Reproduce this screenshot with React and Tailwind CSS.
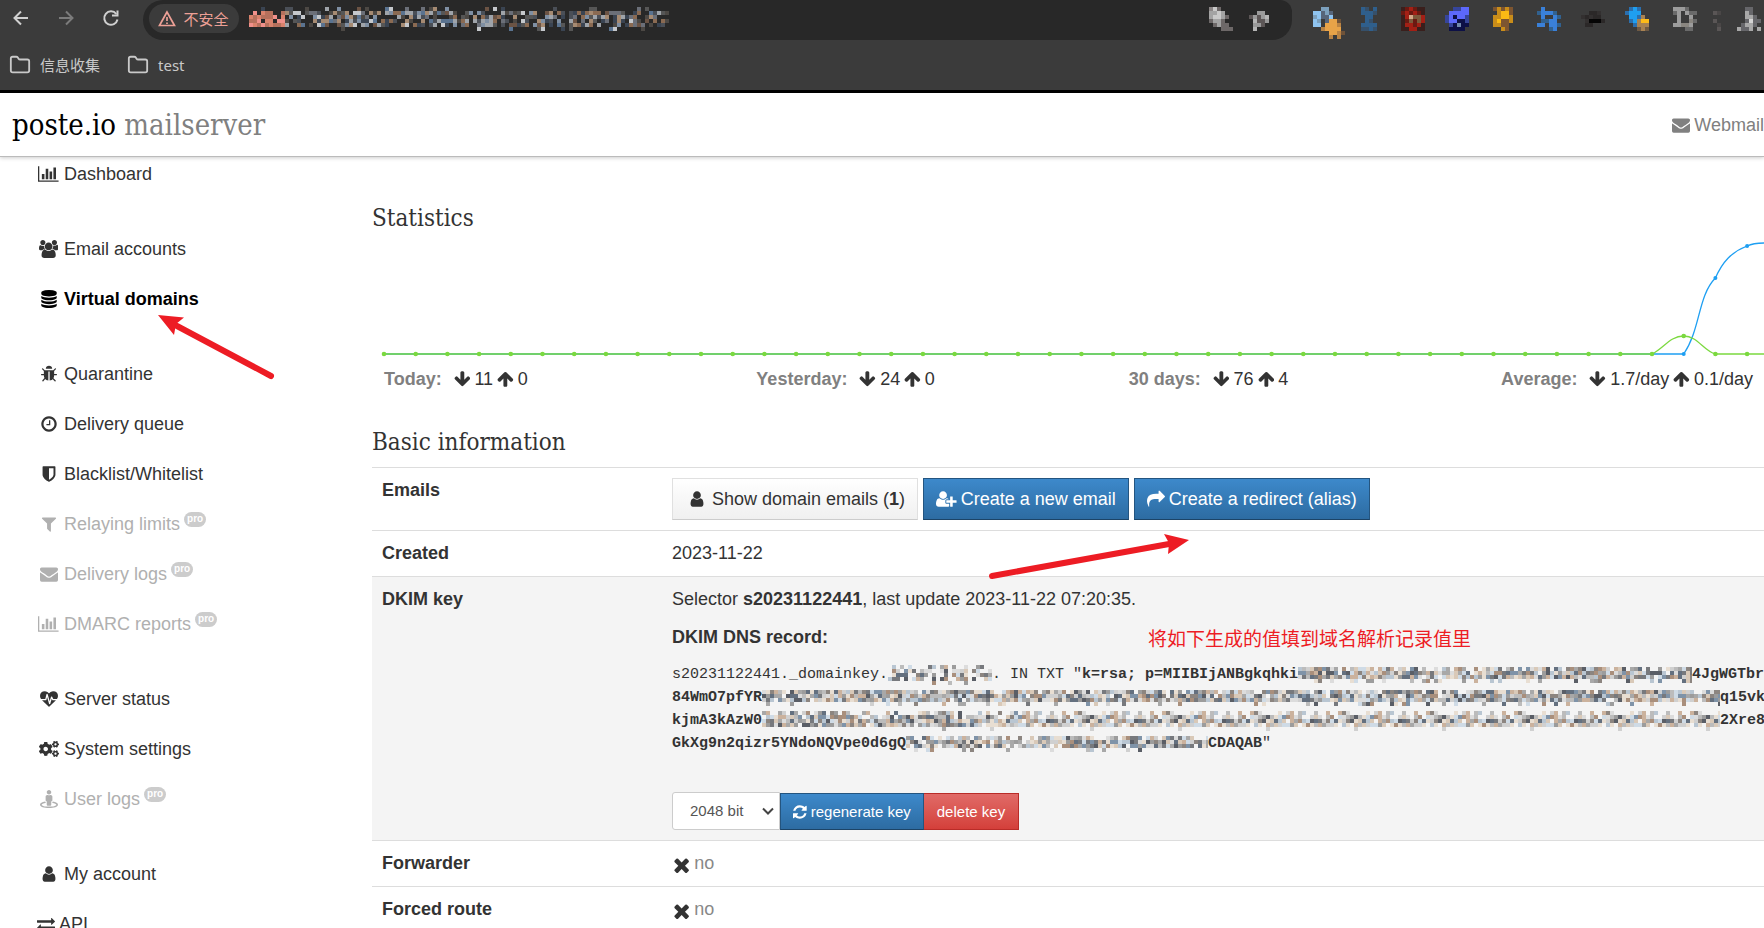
import React from "react";
import { FaCogs, FaStreetView } from "react-icons/fa";
import { LuFolder } from "react-icons/lu";

const ICONS = {
  chart: { box: "0 0 2048 1792", d: "M640 896v512h-256v-512h256zm384-512v1024h-256v-1024h256zm1024 1152v128h-2048v-1536h128v1408h1920zm-640-896v768h-256v-768h256zm384-384v1152h-256v-1152h256z" },
  users: { box: "64 0 1920 1792", d: "M657 896q-162 5-265 128h-134q-82 0-138-40.5t-56-118.5q0-353 124-353 6 0 43.5 21t97.5 42.5 119 21.5q67 0 133-23-5 37-5 66 0 159 93 293zm1071 637q0 120-73 189.5t-194 69.5h-874q-121 0-194-69.5t-73-189.5q0-53 3.5-103.5t14-109 26.5-108.5 43-97.5 62-81 85.5-53.5 111.5-20q10 0 43 21.5t73 48 107 48 135 21.5 135-21.5 107-48 73-48 43-21.5q61 0 111.5 20t85.5 53.5 62 81 43 97.5 26.5 108.5 14 109 3.5 103.5zm-1024-1277q0 106-75 181t-181 75-181-75-75-181 75-181 181-75 181 75 75 181zm704 384q0 159-112.5 271.5t-271.5 112.5-271.5-112.5-112.5-271.5 112.5-271.5 271.5-112.5 271.5 112.5 112.5 271.5zm576 225q0 78-56 118.5t-138 40.5h-134q-103-123-265-128 93-134 93-293 0-29-5-66 66 23 133 23 59 0 119-21.5t97.5-42.5 43.5-21q124 0 124 353zm-128-609q0 106-75 181t-181 75-181-75-75-181 75-181 181-75 181 75 75 181z" },
  database: { box: "0 0 1792 1792", d: "M896 768q237 0 443-43t325-127v170q0 69-103 128t-280 93.5-385 34.5-385-34.5-280-93.5-103-128v-170q119 84 325 127t443 43zm0 768q237 0 443-43t325-127v170q0 69-103 128t-280 93.5-385 34.5-385-34.5-280-93.5-103-128v-170q119 84 325 127t443 43zm0-384q237 0 443-43t325-127v170q0 69-103 128t-280 93.5-385 34.5-385-34.5-280-93.5-103-128v-170q119 84 325 127t443 43zm0-1152q208 0 385 34.5t280 93.5 103 128v128q0 69-103 128t-280 93.5-385 34.5-385-34.5-280-93.5-103-128v-128q0-69 103-128t280-93.5 385-34.5z" },
  bug: { box: "0 0 1792 1792", d: "M1696 960q0 26-19 45t-45 19h-224q0 171-67 290l208 209q19 19 19 45t-19 45q-18 19-45 19t-45-19l-198-197q-5 5-15 13t-42 28.5-65 36.5-82 29-97 13v-896h-128v896q-51 0-101.5-13.5t-87-33-66-39-43.5-32.5l-15-14-183 207q-20 21-48 21-24 0-43-16-19-18-20.5-44.5t15.5-46.5l202-227q-58-114-58-274h-224q-26 0-45-19t-19-45 19-45 45-19h224v-294l-173-173q-19-19-19-45t19-45 45-19 45 19l173 173h844l173-173q19-19 45-19t45 19 19 45-19 45l-173 173v294h224q26 0 45 19t19 45zm-480-576h-640q0-133 93.5-226.5t226.5-93.5 226.5 93.5 93.5 226.5z" },
  clock: { box: "0 0 1792 1792", d: "M1024 544v448q0 14-9 23t-23 9h-320q-14 0-23-9t-9-23v-64q0-14 9-23t23-9h224v-352q0-14 9-23t23-9h64q14 0 23 9t9 23zm416 352q0-148-73-273t-198-198-273-73-273 73-198 198-73 273 73 273 198 198 273 73 273-73 198-198 73-273zm224 0q0 209-103 385.5t-279.5 279.5-385.5 103-385.5-103-279.5-279.5-103-385.5 103-385.5 279.5-279.5 385.5-103 385.5 103 279.5 279.5 103 385.5z" },
  shield: { box: "0 0 1792 1792", d: "M1344 960v-640h-448v1137q119-63 213-137 235-184 235-360zm192-768v768q0 86-33.5 170.5t-83 150-118 127.5-126.5 103-121 77.5-89.5 49.5-42.5 20q-12 6-26 6t-26-6q-16-7-42.5-20t-89.5-49.5-121-77.5-126.5-103-118-127.5-83-150-33.5-170.5v-768q0-26 19-45t45-19h1152q26 0 45 19t19 45z" },
  filter: { box: "0 0 1792 1792", d: "M1595 295q17 41-14 70l-493 493v742q0 42-39 59-13 5-25 5-27 0-45-19l-256-256q-19-19-19-45v-486l-493-493q-31-29-14-70 17-39 59-39h1280q42 0 59 39z" },
  envelope: { box: "0 0 1792 1792", d: "M1792 710v794q0 66-47 113t-113 47h-1472q-66 0-113-47t-47-113v-794q44 49 101 87 362 246 497 345 57 42 92.5 65.5t94.5 48 110 24.5h2q51 0 110-24.5t94.5-48 92.5-65.5q170-123 498-345 57-39 100-87zm0-294q0 79-49 151t-122 123q-376 261-468 325-10 7-42.5 31t-54 38.5-52 32.5-57.5 27-50 9h-2q-23 0-50-9t-57.5-27-52-32.5-54-38.5-42.5-31q-91-64-262-182.5t-205-142.5q-62-42-117-115.5t-55-136.5q0-78 41.5-130t118.5-52h1472q65 0 112.5 47t47.5 113z" },
  heartbeat: { box: "0 0 1792 1792", d: "M1280 1024h305q-5 6-10 10.5t-9 7.5l-3 4-623 600q-18 18-44 18t-44-18l-624-602q-5-2-21-20h369q22 0 39.5-13.5t22.5-34.5l70-281 190 667q6 20 23 33t39 13q21 0 38-13t23-33l146-485 56 112q18 35 57 35zm512-428q0 145-103 300h-369l-111-221q-8-17-25.5-27t-36.5-8q-45 5-56 46l-129 430-196-686q-6-20-23.5-33t-39.5-13-39 13.5-22 34.5l-116 464h-423q-103-155-103-300 0-220 127-344t351-124q62 0 126.5 21.5t120 58 95.5 68.5 76 68q36-36 76-68t95.5-68.5 120-58 126.5-21.5q224 0 351 124t127 344z" },
  user: { box: "0 0 1792 1792", d: "M1536 1399q0 109-62.5 187t-150.5 78h-854q-88 0-150.5-78t-62.5-187q0-85 8.5-160.5t31.5-152 58.5-131 94-89 134.5-34.5q131 128 313 128t313-128q76 0 134.5 34.5t94 89 58.5 131 31.5 152 8.5 160.5zm-256-887q0 159-112.5 271.5t-271.5 112.5-271.5-112.5-112.5-271.5 112.5-271.5 271.5-112.5 271.5 112.5 112.5 271.5z" },
  userPlus: { box: "0 0 2048 1792", d: "M704 896q-159 0-271.5-112.5t-112.5-271.5 112.5-271.5 271.5-112.5 271.5 112.5 112.5 271.5-112.5 271.5-271.5 112.5zm960 128h352q13 0 22.5 9.5t9.5 22.5v192q0 13-9.5 22.5t-22.5 9.5h-352v352q0 13-9.5 22.5t-22.5 9.5h-192q-13 0-22.5-9.5t-9.5-22.5v-352h-352q-13 0-22.5-9.5t-9.5-22.5v-192q0-13 9.5-22.5t22.5-9.5h352v-352q0-13 9.5-22.5t22.5-9.5h192q13 0 22.5 9.5t9.5 22.5v352zm-736 224q0 52 38 90t90 38h256v238q-68 50-171 50h-874q-121 0-194-69t-73-190q0-53 3.5-103.5t14-109 26.5-108.5 43-97.5 62-81 85.5-53.5 111.5-20q19 0 39 17 79 61 154.5 91.5t164.5 30.5 164.5-30.5 154.5-91.5q20-17 39-17 132 0 217 96h-223q-52 0-90 38t-38 90v192z" },
  share: { box: "0 0 1792 1792", d: "M1792 640q0 26-19 45l-512 512q-19 19-45 19t-45-19-19-45v-256h-224q-98 0-175.5 6t-154 21.5-133 42.5-105.5 69.5-80 101-48.5 138.5-17.5 181q0 55 5 123 0 6 2.5 23.5t2.5 26.5q0 15-8.5 25t-23.5 10q-16 0-28-17-7-9-13-22t-13.5-30-10.5-24q-127-285-127-451 0-199 53-333 162-403 875-403h224v-256q0-26 19-45t45-19 45 19l512 512q19 19 19 45z" },
  refresh: { box: "128 0 1536 1792", d: "M1639 1056q0 5-1 7-64 268-268 434.5t-478 166.5q-146 0-282.5-55t-243.5-157l-129 129q-19 19-45 19t-45-19-19-45v-448q0-26 19-45t45-19h448q26 0 45 19t19 45-19 45l-137 137q71 66 161 102t187 36q134 0 250-65t186-179q11-17 53-117 8-23 30-23h192q13 0 22.5 9.5t9.5 22.5zm25-800v448q0 26-19 45t-45 19h-448q-26 0-45-19t-19-45 19-45l138-138q-148-137-349-137-134 0-250 65t-186 179q-11 17-53 117-8 23-30 23h-199q-13 0-22.5-9.5t-9.5-22.5v-7q65-268 270-434.5t480-166.5q146 0 284 55.5t245 156.5l130-129q19-19 45-19t45 19 19 45z" },
  times: { box: "192 0 1408 1792", d: "M1490 1322q0 40-28 68l-136 136q-28 28-68 28t-68-28l-294-294-294 294q-28 28-68 28t-68-28l-136-136q-28-28-28-68t28-68l294-294-294-294q-28-28-28-68t28-68l136-136q28-28 68-28t68 28l294 294 294-294q28-28 68-28t68 28l136 136q28 28 28 68t-28 68l-294 294 294 294q28 28 28 68z" },
  down: { box: "64 0 1664 1792", d: "M1675 832q0 53-37 90l-651 652q-39 37-91 37-53 0-90-37l-651-652q-38-36-38-90 0-53 38-91l74-75q39-37 91-37 53 0 90 37l294 294v-704q0-52 38-90t90-38h128q52 0 90 38t38 90v704l294-294q37-37 90-37 52 0 91 37l75 75q37 39 37 91z" },
  up: { box: "64 0 1664 1792", d: "M1675 971q0 51-37 90l-75 75q-38 38-91 38-54 0-90-38l-294-293v704q0 52-37.5 84.5t-90.5 32.5h-128q-53 0-90.5-32.5t-37.5-84.5v-704l-294 293q-36 38-90 38t-90-38l-75-75q-38-38-38-90 0-53 38-91l651-651q35-37 90-37 54 0 91 37l651 651q37 39 37 91z" },
  exchange: { box: "0 0 1792 1792", d: "M1792 1184v192q0 13-9.5 22.5t-22.5 9.5h-1376v192q0 13-9.5 22.5t-22.5 9.5q-12 0-24-10l-319-320q-9-9-9-22 0-14 9-23l320-320q9-9 23-9 13 0 22.5 9.5t9.5 22.5v192h1376q13 0 22.5 9.5t9.5 22.5zm0-544q0 14-9 23l-320 320q-9 9-23 9-13 0-22.5-9.5t-9.5-22.5v-192h-1376q-13 0-22.5-9.5t-9.5-22.5v-192q0-13 9.5-22.5t22.5-9.5h1376v-192q0-14 9-23t23-9q12 0 24 10l319 319q9 9 9 23z" },
};

function Icon({ name, className = "h-[18px]" }) {
  if (name === "cogs") return <FaCogs className="size-5 shrink-0" aria-hidden="true" />;
  if (name === "street") return <FaStreetView className="size-[18px] shrink-0" aria-hidden="true" />;
  const { box, d } = ICONS[name];
  return (
    <svg viewBox={box} className={`${className} w-auto shrink-0`} fill="currentColor" aria-hidden="true">
      <path d={d} />
    </svg>
  );
}

/* Pixelated blocks that hide private text. */
const LIGHT = ["#5a5e66", "#77797d", "#8c8580", "#9c9c9c", "#a98f7c", "#7f93a8", "#b9c6d2", "#cfdbe6", "#d9c9b8", "#bcbcbc", "#dcdcdc", "#e8ded2", "#64707f", "#cbb29d", "#a8a8a8", "#d0d0d0"];
const DARK = ["#4a4f57", "#6b6f78", "#8a6a52", "#5a7390", "#9fa4aa", "#c5c8cc", "#3a4452", "#6b5344", "#a58a72", "#4c4844", "#7f8fa3", "#565656"];

function Mosaic({ width, rows, seed, dark = false }) {
  let s = seed;
  const rand = () => {
    s = (s * 1103515245 + 12345) % 2147483648;
    return s / 2147483648;
  };
  const palette = dark ? DARK : LIGHT;
  const cells = [];
  const cols = Math.ceil(width / 4);
  for (let c = 0; c < cols; c++) {
    rows.forEach((p, r) => {
      const hit = rand() < p;
      let color = palette[Math.floor(rand() * palette.length)];
      if (dark && c < 9 && r > 0 && r < 5) color = ["#d9826c", "#f0908a", "#b5705c"][Math.floor(rand() * 3)];
      if (hit) cells.push(<rect key={`${c}-${r}`} x={c * 4} y={r * 4} width="4" height="4" fill={color} />);
    });
  }
  return (
    <svg width={width} height={rows.length * 4} className="shrink-0" shapeRendering="crispEdges" aria-hidden="true">
      {cells}
    </svg>
  );
}

/* Small 4px-cell pictures for the toolbar's extension buttons; w is the slot each one takes. */
const SPRITES = [
  { w: 28, colors: { a: "#8fc4f0", b: "#7ca0bd", c: "#56657a", o: "#e8a348", p: "#b98344", q: "#6f5238" },
    rows: ["..bb....", "aacbc...", "bacca...", "ab.cooq.", "aa.ooop.", "..poooo.", "....oopq", "....p.p."] },
  { w: 20, colors: { a: "#2f5f8c", b: "#36506a" }, rows: ["ab.a", "aaab", ".aa.", ".ab.", "aaaa", "bbab"] },
  { w: 24, colors: { r: "#a32015", d: "#3a1f1c", m: "#6b1a12", t: "#d4a888", b: "#7c5a3c" }, rows: ["dmrmdd", "mrmrmd", "drtbbr", "dmbmbr", "drrmrd", "ddrrdd"] },
  { w: 28, colors: { v: "#5c68fb", d: "#36459a", n: "#0d1046", g: "#7289ac" }, rows: ["..ddvv", ".vvvvv", "dvnvvd", "dvvnnd", ".dngnn", ".nnnn."] },
  { w: 24, colors: { y: "#fbb914", o: "#c98d1a", b: "#7d5530" }, rows: ["bobob", ".oyyb", "ooyyo", "oybbo", "oobb.", "..ob."] },
  { w: 24, colors: { b: "#3a80d8", d: "#31618f" }, rows: [".b....", "dbbbd.", ".b..bd", ".ddbb.", "bb.bbd", "...db."] },
  { w: 24, colors: { k: "#050505", d: "#2b2828", m: "#333030" }, rows: ["......", "..ddm.", "mdmdd.", ".mkkkd", ".dd...", "......"] },
  { w: 28, colors: { b: "#1f9ff0", d: "#2b6fae", y: "#fdbb19", o: "#a88252", p: "#6f5a44" }, rows: [".dbd..", "dbbb..", ".bbdo.", ".dboyy", "..dooo", "...pop"] },
  { w: 20, colors: { g: "#9c9c9c", d: "#6a6a6a", e: "#8a8680" }, rows: ["gggd..", "dg.gdd", ".g..g.", ".g..ed", "ggeeg.", "...dd."] },
  { w: 4, colors: { g: "#5a5656", d: "#4a4747" }, rows: ["..", "gd", "..", "g.", ".d", ".g"] },
  { w: 24, colors: { g: "#a8a8a8", d: "#66666a", e: "#d4d4d4" }, rows: ["..dd..", "..gd..", "..ggd.", "..dedd", ".dggd.", "gddg.g"] },
];
const BAR_SPRITES = [
  { w: 20, colors: { g: "#a3a3a3", l: "#c9c9c9", d: "#6d6868", m: "#8a8585" }, rows: ["mld...", "gglg..", "gllgd.", "dggd..", ".dgdd.", "...ddd"] },
  { w: 20, colors: { g: "#9a9a9a", d: "#5c5656", l: "#b5b5b5" }, rows: [".....", "..gg.", "dgdgl", ".lddg", ".ggd.", ".l..."] },
];

function Sprite({ sprite }) {
  return (
    <svg width={sprite.w} height="32" className="shrink-0 overflow-visible" shapeRendering="crispEdges" aria-hidden="true">
      {sprite.rows.flatMap((row, y) =>
        [...row].map((ch, x) =>
          ch === "." ? null : <rect key={`${x}-${y}`} x={x * 4} y={y * 4} width="4" height="4" fill={sprite.colors[ch]} />
        )
      )}
    </svg>
  );
}

function BrowserBar() {
  return (
    <div className="h-[93px] shrink-0 overflow-hidden border-b-3 border-black bg-[#3b3b3b] font-['Noto_Sans','Noto_Sans_CJK_SC',sans-serif] text-[15px] text-[#c9c9c9]">
      <div className="flex h-10 items-start">
        <div className="flex h-9 w-[143px] shrink-0 items-center gap-[25px] pl-[11px]">
          <button aria-label="Back" className="text-[#d0d0d0]">
            <svg width="20" height="20" viewBox="0 0 20 20" fill="none" stroke="currentColor" strokeWidth="2"><path d="M17 10H4M10 3.5L3.500 10l6.500 6.500" /></svg>
          </button>
          <button aria-label="Forward" className="text-[#7b7b7b]">
            <svg width="20" height="20" viewBox="0 0 20 20" fill="none" stroke="currentColor" strokeWidth="2"><path d="M3 10h13M10 3.500L16.500 10 10 16.500" /></svg>
          </button>
          <button aria-label="Reload" className="text-[#d0d0d0]">
            <svg width="20" height="20" viewBox="0 0 20 20" fill="none" stroke="currentColor" strokeWidth="2"><path d="M16.500 11.500A6.700 6.700 0 1 1 15.300 6" /><path d="M16.500 2.500v5h-5.500" /></svg>
          </button>
        </div>
        <div className="flex h-10 min-w-0 grow items-start rounded-l-[20px] rounded-tr-[12px] rounded-br-[20px] bg-[#282828] pl-1.5">
          <button className="mt-1 flex h-[29px] shrink-0 items-center gap-1.5 rounded-full bg-[#3b3b3b] px-[9px] text-[#eda096]">
            <svg width="18" height="18" viewBox="0 0 18 18" fill="none" stroke="currentColor" strokeWidth="1.700"><path d="M9 2L1.500 15.500h15z" /><path d="M9 7v4M9 12.500v1.500" /></svg>
            <span className="w-12 text-center">不安全</span>
          </button>
          <div className="mt-[7px] ml-2.5 grow">
            <Mosaic width={420} rows={[0.25, 0.62, 0.7, 0.75, 0.68, 0.08]} seed={77} dark />
          </div>
          <div className="mt-[7px] mr-[23px] flex gap-5">
            {BAR_SPRITES.map((s, i) => <Sprite key={i} sprite={s} />)}
          </div>
        </div>
        <div className="mt-[7px] flex w-[472px] shrink-0 gap-5 pl-[21px]">
          {SPRITES.map((s, i) => <Sprite key={i} sprite={s} />)}
        </div>
      </div>
      <div className="flex h-[50px] items-center gap-[27px] pl-[9px]">
        <a href="#info" className="flex items-center gap-[9px]"><LuFolder className="size-[22px]" />信息收集</a>
        <a href="#test" className="flex items-center gap-[9px]"><LuFolder className="size-[22px]" />test</a>
      </div>
    </div>
  );
}

const NAV = [
  [{ icon: "chart", label: "Dashboard" }],
  [{ icon: "users", label: "Email accounts" }, { icon: "database", label: "Virtual domains", active: true }],
  [
    { icon: "bug", label: "Quarantine" },
    { icon: "clock", label: "Delivery queue" },
    { icon: "shield", label: "Blacklist/Whitelist" },
    { icon: "filter", label: "Relaying limits", pro: true },
    { icon: "envelope", label: "Delivery logs", pro: true },
    { icon: "chart", label: "DMARC reports", pro: true },
  ],
  [
    { icon: "heartbeat", label: "Server status" },
    { icon: "cogs", label: "System settings" },
    { icon: "street", label: "User logs", pro: true },
  ],
  [{ icon: "user", label: "My account" }, { icon: "exchange", label: "API", narrow: true }],
];

function NavItem({ icon, label, active, pro, narrow }) {
  const tone = active ? "font-bold text-black" : pro ? "text-[#b0b0b0]" : "text-[#333]";
  return (
    <li>
      <a href="#nav" className={`flex h-[50px] items-center ${tone}`}>
        <span className={`mr-1 flex justify-center ${narrow ? "w-[18px]" : "w-[23px]"}`}><Icon name={icon} /></span>
        {label}
        {pro && (
          <span className="mb-[9px] ml-1 flex h-[15px] items-center rounded-full bg-[#ccc] px-[3px] pb-px text-[10px] leading-none font-bold text-white">pro</span>
        )}
      </a>
    </li>
  );
}

const STEP = 31.7;
const X0 = 12;
const BASE = 120;

function StatsChart() {
  const px = (i) => X0 + i * STEP;
  const flat = Array.from({ length: 44 }, (_, i) => i);
  return (
    <svg viewBox="0 0 1392 128" preserveAspectRatio="none" className="block h-32 w-full" fill="none" role="img" aria-label="Message statistics">
      <path d={`M${X0} ${BASE}H${px(41)}C${px(41) + 17} 95 ${px(41) + 14} 62 ${px(42)} 44C${px(42) + 7} 28 ${px(42) + 16} 18 ${px(43)} 12Q${px(43) + 6} 9 1392 9`} stroke="#1e9ff2" strokeWidth="1.300" />
      <path d={`M${X0} ${BASE}H${px(40)}C${px(40) + 12} 114 ${px(40) + 18} 102 ${px(41)} 102C${px(41) + 14} 102 ${px(41) + 20} 117 ${px(42)} ${BASE}H1392`} stroke="#7bd93f" strokeWidth="1.300" />
      {flat.map((i) => (
        <circle key={i} cx={px(i)} cy={i === 41 ? 102 : BASE} r="2.300" fill="#7bd93f" />
      ))}
      <circle cx={px(41)} cy={BASE} r="2" fill="#1e9ff2" />
      <circle cx={px(42)} cy="44" r="2" fill="#1e9ff2" />
      <circle cx={px(43)} cy="12" r="2" fill="#1e9ff2" />
    </svg>
  );
}

const STATS = [
  ["Today:", "11", "0"],
  ["Yesterday:", "24", "0"],
  ["30 days:", "76", "4"],
  ["Average:", "1.7/day", "0.1/day"],
];

const BLUE = "border border-[#245580] border-b-[#1c4467] bg-linear-to-b from-[#3d89cb] to-[#2d6ca2] text-white";

function Row({ label, shaded, children }) {
  return (
    <tr className={`border-t border-[#ddd] align-top ${shaded ? "bg-[#f4f4f4]" : ""}`}>
      <th scope="row" className="w-[290px] px-2.5 pt-[9px] pb-2.5 text-left font-bold">{label}</th>
      <td className="px-2.5 pt-[9px] pb-2.5">{children}</td>
    </tr>
  );
}

function No() {
  return (
    <span className="flex h-[26px] items-center gap-1 pl-px text-[#888]">
      <span className="mt-1 text-[#333]"><Icon name="times" className="h-[22px]" /></span>no
    </span>
  );
}

function DnsRecord() {
  return (
    <div className="mt-[13px] font-['Liberation_Mono',monospace] text-[15px] leading-[23px] whitespace-pre">
      <div className="flex h-[23px] items-center">
        <span>s20231122441._domainkey.</span>
        <Mosaic width={104} rows={[0.35, 0.75, 0.75, 0.6, 0.1]} seed={5} />
        <span>. IN TXT "<b>k=rsa; p=MIIBIjANBgkqhki</b></span>
        <Mosaic width={394} rows={[0.8, 0.92, 0.95, 0.25]} seed={11} />
        <b>4JgWGTbrH</b>
      </div>
      <div className="flex h-[23px] items-center">
        <b>84WmO7pfYR</b>
        <Mosaic width={958} rows={[0.85, 0.96, 0.96, 0.2]} seed={23} />
        <b>q15vkC</b>
      </div>
      <div className="flex h-[23px] items-center">
        <b>kjmA3kAzW0</b>
        <Mosaic width={958} rows={[0.5, 0.9, 0.97, 0.85, 0.08]} seed={37} />
        <b>2Xre8X</b>
      </div>
      <div className="flex h-[23px] items-center">
        <b>GkXg9n2qizr5YNdoNQVpe0d6gQ</b>
        <Mosaic width={302} rows={[0.7, 0.92, 0.92, 0.2]} seed={53} />
        <span><b>CDAQAB</b>"</span>
      </div>
    </div>
  );
}

const HEADING = "font-['Roboto_Slab','DejaVu_Serif_Condensed','DejaVu_Serif',serif]";

export default function App() {
  return (
    <div className="relative flex h-screen flex-col overflow-hidden bg-white font-['Liberation_Sans',Arial,sans-serif] text-[18px] leading-[26px] text-[#333]">
      <BrowserBar />
      <header className="relative z-10 flex h-16 shrink-0 items-center justify-between border-b border-[#bbb] bg-white pl-3 shadow-[0_1px_4px_rgba(0,0,0,0.2)]">
        <h1 className={`${HEADING} text-[29px] text-black`}>poste.io <span className="text-[#808080]">mailserver</span></h1>
        <a href="#webmail" className="flex items-center gap-1 text-[#808080]"><Icon name="envelope" />Webmail</a>
      </header>
      <div className="flex min-h-0 grow">
        <nav className="-mt-2 w-[372px] shrink-0 pl-[37px]">
          <div className="flex flex-col gap-[25px]">
            {NAV.map((group, i) => (
              <ul key={i}>{group.map((item) => <NavItem key={item.label} {...item} />)}</ul>
            ))}
          </div>
        </nav>
        <main className="min-w-0 grow overflow-hidden pt-[45px]">
          <h2 className={`${HEADING} text-[24px] leading-8`}>Statistics</h2>
          <StatsChart />
          <dl className="mt-1 ml-3 grid w-[107%] grid-cols-4">
            {STATS.map(([label, down, up]) => (
              <div key={label} className="flex items-center whitespace-nowrap">
                <dt className="mr-3 font-bold text-[#808080]">{label}</dt>
                <dd className="flex items-center gap-1"><Icon name="down" />{down} <Icon name="up" />{up}</dd>
              </div>
            ))}
          </dl>
          <h2 className={`${HEADING} mt-[34px] mb-[9px] text-[24px] leading-8`}>Basic information</h2>
          <table className="w-full table-fixed border-collapse">
            <tbody>
              <Row label="Emails">
                <div className="flex gap-[5px] pt-px">
                  <button className="flex h-[42px] items-center gap-1 border border-[#e0e0e0] border-b-[#ccc] bg-linear-to-b from-white to-[#f0f0f0] px-3">
                    <span className="flex w-[23px] justify-center"><Icon name="user" /></span>
                    <span>Show domain emails (<b>1</b>)</span>
                  </button>
                  <button className={`flex h-[42px] items-center gap-1 px-3 ${BLUE}`}><Icon name="userPlus" />Create a new email</button>
                  <button className={`flex h-[42px] items-center gap-1 px-3 ${BLUE}`}><Icon name="share" />Create a redirect (alias)</button>
                </div>
              </Row>
              <Row label="Created">2023-11-22</Row>
              <Row label="DKIM key" shaded>
                <p>Selector <b>s20231122441</b>, last update 2023-11-22 07:20:35.</p>
                <p className="mt-3 font-bold">DKIM DNS record:</p>
                <DnsRecord />
                <div className="mt-[37px] flex h-[38px] text-[15px]">
                  <div className="relative w-[108px]">
                    <select aria-label="Key size" className="h-full w-full appearance-none rounded-l-[3px] border border-[#ccc] bg-white pl-[17px] text-[#555]">
                      <option>2048 bit</option>
                    </select>
                    <svg className="pointer-events-none absolute top-[15px] right-1.5 h-2 w-3" viewBox="0 0 12 8" fill="none" stroke="#444" strokeWidth="2"><path d="M1 1.500l5 5 5-5" /></svg>
                  </div>
                  <button className={`mt-px flex items-center gap-1 px-3 ${BLUE}`}><Icon name="refresh" className="h-4" />regenerate key</button>
                  <button className="mt-px border border-l-0 border-[#b92c28] bg-linear-to-b from-[#e06a67] to-[#d43f3a] px-[13px] text-white">delete key</button>
                </div>
              </Row>
              <Row label="Forwarder"><No /></Row>
              <Row label="Forced route"><No /></Row>
            </tbody>
          </table>
        </main>
      </div>
      <svg className="pointer-events-none absolute top-[310px] left-[150px] z-20" width="130" height="75" fill="#ed1c24" aria-hidden="true">
        <path d="M27 16L121 66" stroke="#ed1c24" strokeWidth="6" strokeLinecap="round" />
        <path d="M8 5L34 7.500L26 14L24 25z" />
      </svg>
      <svg className="pointer-events-none absolute top-[530px] left-[985px] z-20" width="210" height="52" fill="#ed1c24" aria-hidden="true">
        <path d="M7 46L184 14" stroke="#ed1c24" strokeWidth="6" strokeLinecap="round" />
        <path d="M204 10L179 4L184 13L183 24z" />
      </svg>
      <p className="pointer-events-none absolute top-[625px] left-[1148px] z-20 font-['Noto_Sans_CJK_SC',sans-serif] text-[19px] text-[#ed1c24]">将如下生成的值填到域名解析记录值里</p>
    </div>
  );
}
